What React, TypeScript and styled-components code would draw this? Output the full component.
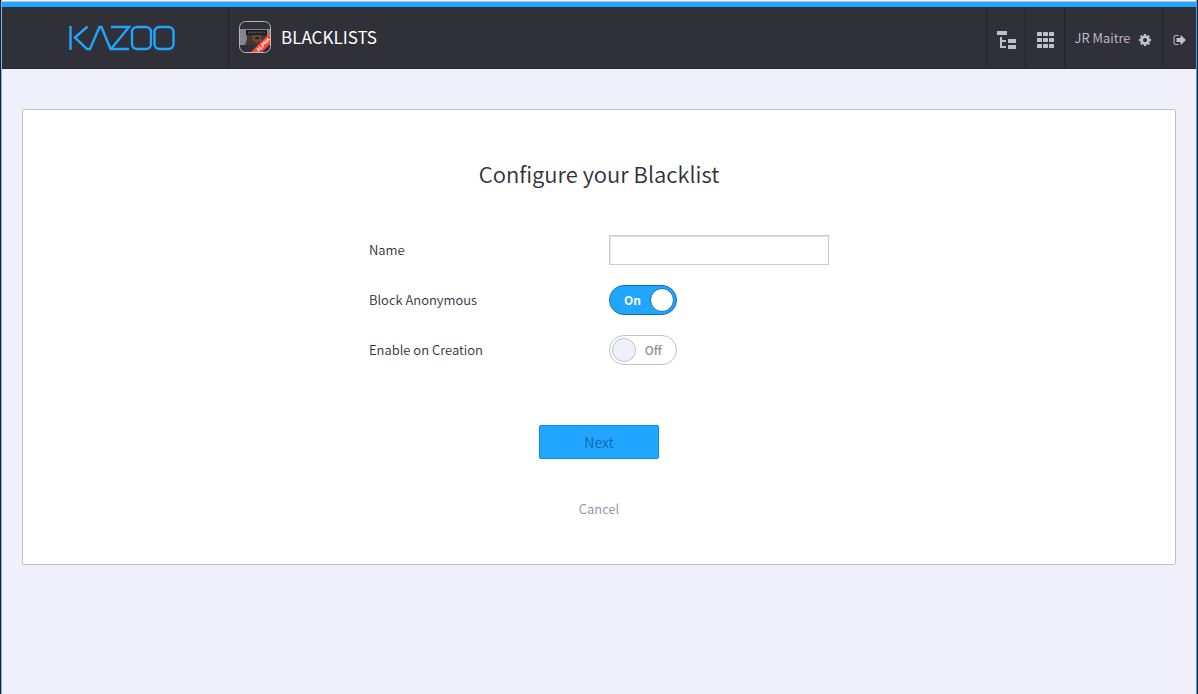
import React, { useState } from 'react';
import styled, { createGlobalStyle } from 'styled-components';

const GlobalStyle = createGlobalStyle`
  *, *::before, *::after { box-sizing: border-box; }
  body {
    margin: 0;
    background: #f0f0fa;
    color: #303039;
    font-family: "Source Sans Pro", "Noto Sans CJK SC", "Open Sans", sans-serif;
    font-size: 13px;
    font-weight: 350;
    line-height: 20px;
  }
  button, input { font: inherit; }
`;

const Frame = styled.div`
  min-height: 100vh;
  border: solid #1c222b;
  border-width: 0 1px;
`;

const Page = styled.div`
  min-height: 100vh;
  border-left: 1px solid #7db9ec;
  border-right: 1px solid #3f9ff0;
`;

const AccentBar = styled.div`
  height: 7px;
  border-top: 1px solid #f2f2f2;
  background: #22a5ff;
  box-shadow: inset 0 1px #b4c4d0;
`;

const TopBar = styled.header`
  display: flex;
  height: 62px;
  background: #303039;
  border-bottom: 1px solid #292931;
`;

const LogoLink = styled.a`
  display: flex;
  align-items: center;
  justify-content: flex-end;
  width: 227px;
  padding-right: 52px;
  border-right: 1px solid #22222c;
`;

const CurrentApp = styled.div`
  display: flex;
  align-items: center;
  flex: 1;
  gap: 10px;
  padding: 0 10px 2px;
`;

const AppName = styled.span`
  color: #fff;
  font-size: 17px;
  font-weight: 400;
  line-height: 24px;
`;

const Nav = styled.nav`
  display: flex;
`;

const NavLink = styled.a<{ $width: number }>`
  display: flex;
  align-items: center;
  justify-content: center;
  gap: 8px;
  width: ${(p) => p.$width}px;
  padding-top: 4px;
  border-left: 1px solid #22222c;
  color: #c0c0c9;
  text-decoration: none;
  white-space: nowrap;
`;

const UserName = styled.span`
  padding-bottom: 4px;
`;

const Content = styled.main`
  padding: 40px 20px;
`;

const Card = styled.form`
  display: flex;
  flex-direction: column;
  align-items: center;
  padding: 48px 20px 45px;
  background: #fff;
  border: 1px solid #c0c0c9;
  border-radius: 2px;
`;

const Title = styled.h1`
  margin: 0 0 47px;
  font-size: 22px;
  font-weight: 350;
  line-height: 30px;
`;

const Fields = styled.div`
  display: grid;
  gap: 20px;
  width: 460px;
  max-width: 100%;
`;

const Field = styled.div`
  display: grid;
  grid-template-columns: 240px 1fr;
  align-items: center;
  height: 30px;
`;

const TextInput = styled.input`
  width: 100%;
  height: 30px;
  padding: 4px 6px;
  border: 1px solid #ccc;
  border-radius: 0;
  background: #fff;
  box-shadow: inset 1px 1px #e6e6e6;
  outline: none;
`;

const Switch = styled.label<{ $on: boolean }>`
  display: flex;
  flex-direction: ${(p) => (p.$on ? 'row' : 'row-reverse')};
  align-items: center;
  justify-content: space-between;
  width: 68px;
  height: 30px;
  padding: ${(p) => (p.$on ? '0 2px 0 14px' : '0 14px 0 2px')};
  border: 1px solid ${(p) => (p.$on ? '#0a6fbb' : '#c0c0c9')};
  border-radius: 15px;
  background: ${(p) => (p.$on ? '#22a5ff' : '#fff')};
  color: ${(p) => (p.$on ? '#fff' : '#90909a')};
  font-size: 12px;
  font-weight: ${(p) => (p.$on ? 700 : 500)};
  cursor: pointer;
`;

const Knob = styled.input<{ $on: boolean }>`
  appearance: none;
  width: 24px;
  height: 24px;
  margin: 0;
  border: 1px solid ${(p) => (p.$on ? '#0a6fbb' : '#c0c0c9')};
  border-radius: 50%;
  background: ${(p) => (p.$on ? '#fff' : '#f0f0fa')};
  cursor: pointer;
`;

const NextButton = styled.button`
  width: 120px;
  height: 34px;
  margin-top: 60px;
  padding: 0;
  border: 1px solid #0090f5;
  border-radius: 2px;
  background: #22a5ff;
  color: #0a6aad;
  font-size: 14px;
  cursor: pointer;
`;

const CancelLink = styled.a`
  margin-top: 40px;
  color: #90909a;
  text-decoration: none;
`;

const KazooLogo = () => (
  <svg width="108" height="26" viewBox="0 0 108 26" fill="none" stroke="#22a5ff" strokeWidth="2.400" aria-label="Kazoo" role="img">
    <path d="M2.500 1V25M19.500 1.500L7 12.500L19 24H22L31.500 2H33.500L42.500 24H61M43 24L61 2H43" />
    <rect x="64" y="2" width="19" height="22" rx="5" />
    <rect x="86.500" y="2" width="19" height="22" rx="5" />
  </svg>
);

const BlacklistIcon = () => (
  <svg width="32" height="32" viewBox="0 0 32 32" aria-hidden="true">
    <defs>
      <clipPath id="tile"><rect width="32" height="32" rx="6" /></clipPath>
    </defs>
    <g clipPath="url(#tile)">
      <rect width="32" height="32" fill="#303039" />
      <rect y="8" width="32" height="16" fill="#85858c" />
      <path d="M7 9H28V24H6L8 18Z" fill="#49332c" />
      <path d="M13 15L18 13L22 15L23 20L18 22L14 20Z" fill="#6b4838" />
      <path d="M16 16H20V18H16Z" fill="#291f20" />
      <rect x="7" y="9" width="21" height="5" fill="#18181d" />
      <path d="M9 11.500H26" stroke="#55555e" strokeWidth="2" strokeDasharray="1.500 .8" />
      <path d="M11 32L32 11V22L22 32Z" fill="#ff4433" />
      <text transform="translate(19.500 31) rotate(-46)" fill="#fff" fontSize="5" fontWeight="700" fontFamily="Liberation Sans, sans-serif">ALPHA</text>
    </g>
    <rect x=".5" y=".5" width="31" height="31" rx="6" fill="none" stroke="#b5b5bc" />
  </svg>
);

const TreeIcon = () => (
  <svg width="20" height="18" viewBox="0 0 20 18" fill="currentColor" aria-hidden="true">
    <path d="M1 0H11V4H1ZM12 8H20V12H12ZM12 14H20V18H12Z" />
    <path d="M5 6V16H10M5 10H10" fill="none" stroke="currentColor" strokeWidth="2" />
  </svg>
);

const GridIcon = () => (
  <svg width="17" height="16" viewBox="0 0 17 16" fill="currentColor" aria-hidden="true">
    {[0, 6, 12].map((y) => [0, 6, 12].map((x) => (
      <rect key={`${x}-${y}`} x={x} y={y} width="5" height="4" rx=".5" />
    )))}
  </svg>
);

const CogIcon = () => (
  <svg width="14" height="14" viewBox="0 0 1792 1792" fill="currentColor" aria-hidden="true">
    <path d="M1152 896q0-106-75-181t-181-75-181 75-75 181 75 181 181 75 181-75 75-181zm512-109v222q0 12-8 23t-20 13l-185 28q-19 54-39 91 35 50 107 138 10 12 10 25t-9 23q-27 37-99 108t-94 71q-12 0-26-9l-138-108q-44 23-91 38-16 136-29 186-7 28-36 28h-222q-14 0-24.500-8.500t-11.500-21.500l-28-184q-49-16-90-37l-141 107q-10 9-25 9-14 0-25-11-126-114-165-168-7-10-7-23 0-12 8-23 15-21 51-66.500t54-70.500q-27-50-41-99l-183-27q-13-2-21-12.500t-8-23.500v-222q0-12 8-23t19-13l186-28q14-46 39-92-40-57-107-138-10-12-10-24 0-10 9-23 26-36 98.500-107.500t94.500-71.500q13 0 26 10l138 107q44-23 91-38 16-136 29-186 7-28 36-28h222q14 0 24.500 8.500t11.500 21.500l28 184q49 16 90 37l142-107q9-9 24-9 13 0 25 10 129 119 165 170 7 8 7 22 0 12-8 23-15 21-51 66.500t-54 70.500q26 50 41 98l183 28q13 2 21 12.500t8 23.500z" />
  </svg>
);

const SignOutIcon = () => (
  <svg width="14" height="14" viewBox="0 0 1792 1792" fill="currentColor" aria-hidden="true">
    <path d="M704 1440q0 4 1 20t.5 26.500-3 23.500-10 19.500-20.500 6.500h-320q-119 0-203.500-84.500t-84.500-203.500v-704q0-119 84.500-203.500t203.500-84.500h320q13 0 22.500 9.500t9.500 22.500q0 4 1 20t.5 26.500-3 23.500-10 19.500-20.500 6.500h-320q-66 0-113 47t-47 113v704q0 66 47 113t113 47h312l11.500 1 11.500 3 8 5.500 7 9 2 13.500zm928-544q0 26-19 45l-544 544q-19 19-45 19t-45-19-19-45v-288h-448q-26 0-45-19t-19-45v-384q0-26 19-45t45-19h448v-288q0-26 19-45t45-19 45 19l544 544q19 19 19 45z" />
  </svg>
);

function Toggle({ id, initial }: { id: string; initial: boolean }) {
  const [on, setOn] = useState(initial);
  return (
    <Switch $on={on} htmlFor={id}>
      {on ? 'On' : 'Off'}
      <Knob id={id} type="checkbox" $on={on} checked={on} onChange={(e) => setOn(e.target.checked)} />
    </Switch>
  );
}

export default function App() {
  return (
    <Frame>
      <GlobalStyle />
      <Page>
        <AccentBar />
        <TopBar>
          <LogoLink href="#home"><KazooLogo /></LogoLink>
          <CurrentApp>
            <BlacklistIcon />
            <AppName>BLACKLISTS</AppName>
          </CurrentApp>
          <Nav>
            <NavLink $width={39} href="#accounts" aria-label="Accounts"><TreeIcon /></NavLink>
            <NavLink $width={39} href="#apps" aria-label="Apps"><GridIcon /></NavLink>
            <NavLink $width={98} href="#profile"><UserName>JR Maitre</UserName><CogIcon /></NavLink>
            <NavLink $width={34} href="#logout" aria-label="Log out"><SignOutIcon /></NavLink>
          </Nav>
        </TopBar>
        <Content>
          <Card onSubmit={(e) => e.preventDefault()}>
            <Title>Configure your Blacklist</Title>
            <Fields>
              <Field>
                <label htmlFor="name">Name</label>
                <TextInput id="name" type="text" />
              </Field>
              <Field>
                <label htmlFor="block">Block Anonymous</label>
                <Toggle id="block" initial />
              </Field>
              <Field>
                <label htmlFor="enable">Enable on Creation</label>
                <Toggle id="enable" initial={false} />
              </Field>
            </Fields>
            <NextButton type="submit">Next</NextButton>
            <CancelLink href="#cancel">Cancel</CancelLink>
          </Card>
        </Content>
      </Page>
    </Frame>
  );
}
